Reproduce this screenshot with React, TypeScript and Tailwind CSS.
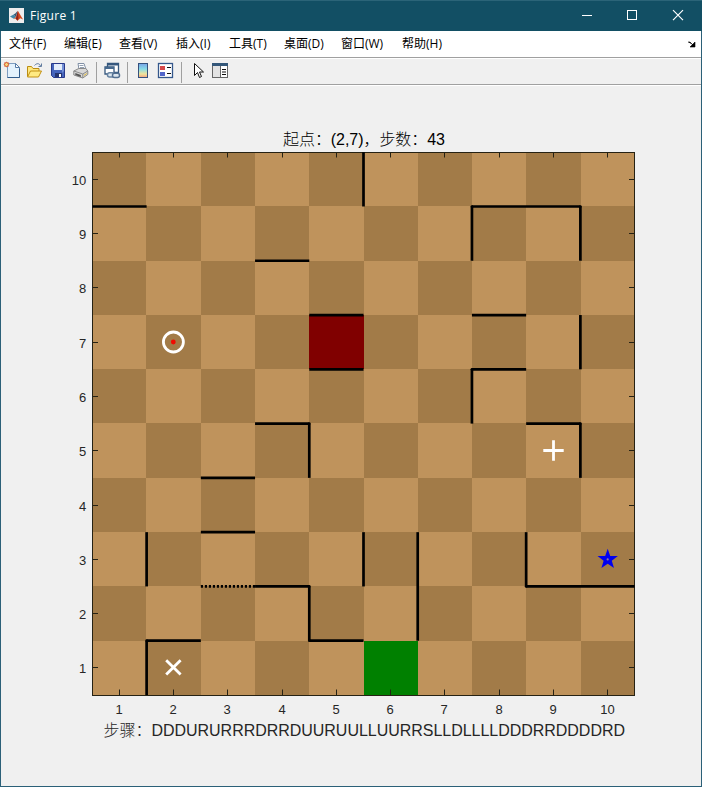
import React from "react";

const COLS = [92, 146, 201, 255, 309, 364, 418, 472, 526, 581, 634];
const ROWS = [152, 206, 261, 315, 369, 423, 478, 532, 586, 641, 695];
const TICK_X = [119.5, 173.5, 227.5, 282.5, 336.5, 390.5, 444.5, 499.5, 553.5, 607.5];
const TICK_Y = [179.5, 233.5, 287.5, 342.5, 396.5, 450.5, 505.5, 559.5, 613.5, 667.5];

const gx = (i: number) => 92.4 + 54.22 * i;
const gy = (j: number) => 152.2 + 54.28 * j;

// [x1, y1, x2, y2] in cell units, y counted from the top edge
const WALLS: [number, number, number, number][] = [
  [0, 1, 1, 1], [7, 1, 9, 1], [3, 2, 4, 2], [4, 3, 5, 3], [7, 3, 8, 3],
  [4, 4, 5, 4], [7, 4, 8, 4], [8, 5, 9, 5], [3, 5, 4, 5], [2, 6, 3, 6],
  [2, 7, 3, 7], [3, 8, 4, 8], [8, 8, 10, 8], [1, 9, 2, 9], [4, 9, 5, 9],
  [5, 0, 5, 1], [7, 1, 7, 2], [9, 1, 9, 2], [9, 3, 9, 4], [7, 4, 7, 5],
  [9, 5, 9, 6], [4, 5, 4, 6], [1, 7, 1, 8], [5, 7, 5, 8], [6, 7, 6, 9],
  [8, 7, 8, 8], [4, 8, 4, 9], [1, 9, 1, 10],
];

const MENUS: [string, string][] = [
  ["文件(F)", "w-[55px]"], ["编辑(E)", "w-[55px]"], ["查看(V)", "w-[57px]"],
  ["插入(I)", "w-[53px]"], ["工具(T)", "w-[55px]"], ["桌面(D)", "w-[57px]"],
  ["窗口(W)", "w-[61px]"], ["帮助(H)", "w-[55px]"],
];

const plotFont = "font-['Liberation_Sans','Noto_Sans_CJK_SC',sans-serif]";

function cellColor(c: number, r: number) {
  if (c === 4 && r === 3) return "#800000";
  if (c === 5 && r === 9) return "#008000";
  return (c + r) % 2 === 0 ? "#a27b48" : "#bf935c";
}

function starPoints(cx: number, cy: number, outer: number, inner: number) {
  return Array.from({ length: 10 }, (_, k) => {
    const r = k % 2 === 0 ? outer : inner;
    const a = -Math.PI / 2 + (k * Math.PI) / 5;
    return `${cx + r * Math.cos(a)},${cy + r * Math.sin(a)}`;
  }).join(" ");
}

function Plot() {
  return (
    <svg className={`block ${plotFont}`} width="700" height="700" viewBox="1 86 700 700">
      <g shapeRendering="crispEdges">
        {ROWS.slice(0, 10).map((y, r) =>
          COLS.slice(0, 10).map((x, c) => (
            <rect key={`${c}-${r}`} x={x} y={y} width={COLS[c + 1] - x} height={ROWS[r + 1] - y} fill={cellColor(c, r)} />
          ))
        )}
      </g>
      <g stroke="#262214" strokeWidth="1">
        <rect x="92.5" y="152.5" width="542" height="543" fill="none" />
        {TICK_X.map((x) => (
          <path key={x} d={`M${x} 153v4.5M${x} 695v-5.5`} />
        ))}
        {TICK_Y.map((y) => (
          <path key={y} d={`M93 ${y}h5M634 ${y}h-5`} />
        ))}
      </g>
      <g stroke="#000" strokeWidth="2.7">
        {WALLS.map(([a, b, c, d]) => (
          <line key={`${a}${b}${c}${d}`} x1={gx(a)} y1={gy(b)} x2={gx(c)} y2={gy(d)} />
        ))}
        <line x1={gx(2)} y1={gy(8)} x2={gx(3)} y2={gy(8)} strokeDasharray="2.2 1.8" />
        {/* joined corners */}
        <g fill="#000" stroke="none">
          {[[7, 1], [9, 1], [7, 4], [9, 5], [4, 5], [4, 8], [8, 8], [1, 9], [4, 9]].map(([i, j]) => (
            <circle key={`${i}-${j}`} cx={gx(i)} cy={gy(j)} r="1.35" />
          ))}
        </g>
      </g>
      <g fill="none" stroke="#fff" strokeWidth="2.8">
        <circle cx="173.4" cy="342" r="10" />
        <path d="M166.2 660.2l14.4 14.4M180.6 660.2l-14.4 14.4" />
        <path d="M543.3 450.5h20.4M553.5 440.3v20.4" />
      </g>
      <circle cx="173.3" cy="342" r="2.4" fill="#f00a00" />
      <polygon points={starPoints(607.7, 559.4, 10.7, 4.3)} fill="#0000f0" />
      <circle cx="607.7" cy="559.4" r="1.1" fill="#8f78a0" />
      <g fontSize="13" fill="#262626">
        {TICK_X.map((x, i) => (
          <text key={x} x={x - (i === 9 ? 0 : 0.4)} y="714" textAnchor="middle">{i + 1}</text>
        ))}
        {TICK_Y.map((y, i) => (
          <text key={y} x="86.3" y={y + 5.5} textAnchor="end">{10 - i}</text>
        ))}
      </g>
      <g fontSize="16" className="font-light">
        <text x="283" y="145" fill="#000" textLength="162">起点：(2,7)，步数：43</text>
        <text x="103.5" y="736" fill="#262626" textLength="521.5">步骤：DDDURURRRDRRDUURUULLUURRSLLDLLLLDDDRRDDDDRD</text>
      </g>
    </svg>
  );
}

function Separator({ className }: { className: string }) {
  return <div className={`mt-px h-[21px] w-px bg-[#a0a0a0] ${className}`} />;
}

function Icon({ className, children }: { className: string; children: React.ReactNode }) {
  return (
    <svg className={`mb-[2px] block shrink-0 overflow-visible ${className}`} width="17" height="17" viewBox="0 0 17 17">
      {children}
    </svg>
  );
}

function Toolbar() {
  return (
    <div className="flex h-[26px] items-center border-t border-white bg-[#f0f0f0]">
      <Icon className="ml-[3px]">
        <path d="M3.5 1.5h8l4 4v10h-12z" fill="#e4f2fd" stroke="#7f9dc0" />
        <path d="M11.5 1.5v4h4z" fill="#fff" stroke="#587da8" />
        <path d="M3.5 15.5h12v-9" fill="none" stroke="#315c8c" />
        <path d="M0 0l5 5M5 0l-5 5M2.5 -.5v6M-.5 2.5h6" stroke="#e5a184" strokeWidth=".8" />
        <circle cx="2.5" cy="2.5" r="2" fill="#f6d67b" stroke="#d5532b" />
      </Icon>
      <Icon className="ml-[5px]">
        <path d="M1.5 14.5v-10h4l1.5 2h6v3" fill="#ffe77c" stroke="#ba8c12" />
        <path d="M1.5 15l3-6h11l-3 6z" fill="#ffea82" stroke="#c29012" />
        <path d="M8.5 3.5c2-2.5 5-2.5 6 .5M15.5 1.5v3h-3" fill="none" stroke="#627da0" />
      </Icon>
      <Icon className="ml-[7px]">
        <path d="M1.5 1.5h13v14h-11l-2-2z" fill="#4665bd" stroke="#29398b" />
        <path d="M4 2h8v6H4z" fill="#e4edfb" />
        <path d="M12 2h2v7l-2 2z" fill="#7591d6" />
        <path d="M5 11h7v4H5z" fill="#26356f" />
        <path d="M9 12h2v3H9z" fill="#fff" />
      </Icon>
      <Icon className="ml-[6px]">
        <path d="M5 1.5h6l2 6H6z" fill="#fff" stroke="#8190a6" />
        <path d="M6.5 3.5h4M7 5.5h4" stroke="#92a0b2" />
        <path d="M.8 9l5-2.5h7l2 2.5v3.5l-5 3.5-9-3z" fill="#d8d8d8" stroke="#8a8a8a" />
        <path d="M.8 9l9 3 5-3M9.8 12v4" fill="none" stroke="#8a8a8a" />
        <path d="M2.3 11l5.5 2v2l-5.5-2z" fill="#555" />
        <path d="M10.8 13.5l3-2" stroke="#dfb835" />
      </Icon>
      <Separator className="ml-[6px]" />
      <Icon className="ml-[7px]">
        <path d="M3.5 1.5h11v9h-11z" fill="#fff" stroke="#36587e" strokeWidth="1.3" />
        <path d="M3 1h12v2.5H3z" fill="#36587e" />
        <path d="M1 5h9v7H1z" fill="#fff" stroke="#36587e" strokeWidth="1.3" />
        <path d="M1 5h9v2H1z" fill="#46698e" />
        <rect x="3.5" y="10.7" width="7" height="4.2" rx="2" fill="#dbe6ef" stroke="#6683a2" strokeWidth="1.5" />
        <rect x="8.5" y="11.2" width="7" height="4.2" rx="2" fill="#dbe6ef" stroke="#526f91" strokeWidth="1.5" />
      </Icon>
      <Separator className="ml-[6px]" />
      <Icon className="ml-[7px]">
        <defs>
          <linearGradient id="colorbar" x2="0" y2="1">
            <stop stopColor="#78a2e6" />
            <stop offset=".4" stopColor="#87dce8" />
            <stop offset=".75" stopColor="#f0e49b" />
            <stop offset="1" stopColor="#f0a182" />
          </linearGradient>
        </defs>
        <rect x="3.5" y="1.5" width="9" height="14" fill="url(#colorbar)" stroke="#35517d" />
      </Icon>
      <Icon className="ml-[5px]">
        <rect x="1.5" y="1.5" width="14" height="14" fill="#fff" stroke="#34578b" strokeWidth="1.3" />
        <rect x="3" y="4" width="5" height="4" fill="#d6494b" />
        <rect x="3" y="10" width="5" height="4" fill="#5165cb" />
        <path d="M10 5.5h4M10 11.5h4" stroke="#111" />
      </Icon>
      <Separator className="ml-[7px]" />
      <Icon className="ml-[9px]">
        <path d="M3.5 1.5v12l3-3 2 5 2-1-2-4.5h4z" fill="#fff" stroke="#111" />
      </Icon>
      <Icon className="ml-[3px]">
        <rect x="1.5" y="1.5" width="15" height="14" fill="#d0d0d0" stroke="#666" />
        <path d="M1 1h16v3H1z" fill="#345779" />
        <path d="M2 4h7v11H2z" fill="#e3e3e3" />
        <path d="M9 4h7v11H9z" fill="#fff" />
        <path d="M9.5 4v11" stroke="#666" />
        <path d="M11 7.5h4M11 10h4M11 12.5h4" stroke="#111" />
      </Icon>
    </div>
  );
}

export default function App() {
  return (
    <div className="flex h-[787px] w-[702px] flex-col bg-[#f0f0f0]">
      <header className="flex h-[31px] items-center border-t border-[#2b6478] bg-[#124f64] text-white">
        <svg className="ml-[9px] mb-px block" width="15" height="15" viewBox="0 0 16 16">
          <rect width="16" height="16" fill="#ededed" />
          <path d="M1 9l4-2 2.5 2.5-2.5 2z" fill="#4289a9" />
          <path d="M5 7l2-1.5L9 3.2 7.5 9.5z" fill="#365a77" />
          <path d="M5 11.5l2.5-2L9.5 3l1.8 3.2 3.7 6-3-1.2-3 2.5-1.7-2z" fill="#d64c20" />
          <path d="M9.5 3l.5 8-1 2.5-1.7-2z" fill="#8e251d" />
        </svg>
        <span className="ml-[6px] font-['Open_Sans',sans-serif] text-[12px] leading-4 tracking-[0.28px]">Figure 1</span>
        <svg className="ml-auto block" width="138" height="30" viewBox="564 1 138 30" fill="none" stroke="#fff">
          <path d="M582 15.5h10" />
          <rect x="627.5" y="10.5" width="9" height="9" />
          <path d="M673 10.2l10 10M683 10.2l-10 10" strokeWidth="1.2" />
        </svg>
      </header>
      <div className="flex min-h-0 flex-1 flex-col border-x border-b border-[#2b6078]">
        <nav className="flex h-[27px] items-center border-b border-[#a0a0a0] bg-white pl-2 font-['Open_Sans','Noto_Sans_CJK_SC',sans-serif] text-[12px] leading-4 text-black">
          {MENUS.map(([label, width]) => (
            <span key={label} className={`${width} whitespace-nowrap`}>{label}</span>
          ))}
          <svg className="mr-[5px] ml-auto block" width="8" height="7" viewBox="0 0 8 7">
            <path d="M0 1h2l3 3M7 1v5H2z" fill="#000" stroke="#000" strokeWidth=".6" />
          </svg>
        </nav>
        <Toolbar />
        <div className="h-px bg-[#a0a0a0]" />
        <div className="h-px bg-white" />
        <main className="min-h-0 flex-1 overflow-hidden bg-[#f0f0f0]">
          <Plot />
        </main>
      </div>
    </div>
  );
}
